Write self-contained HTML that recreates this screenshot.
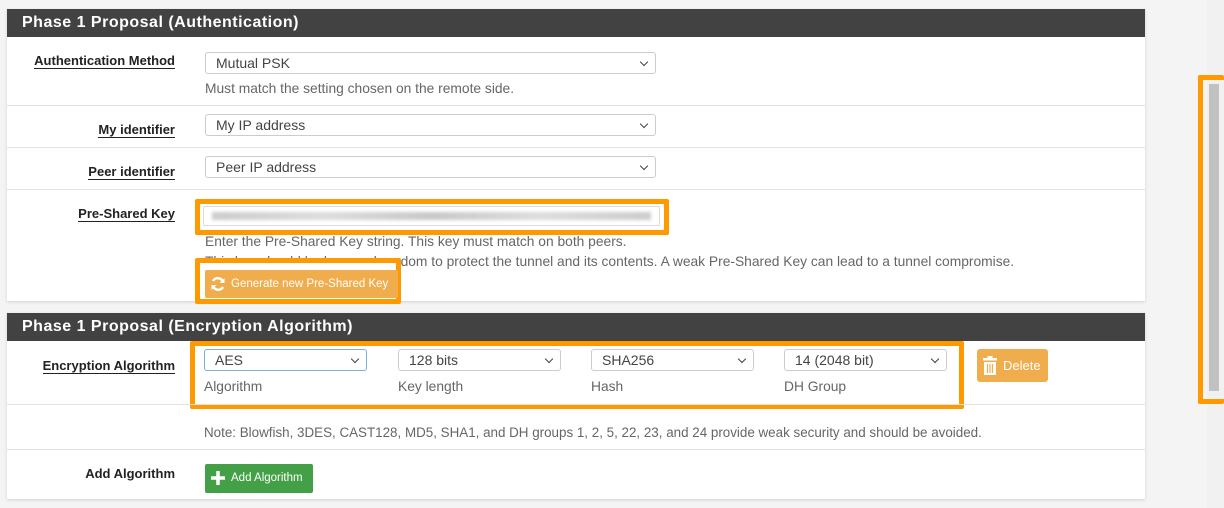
<!DOCTYPE html>
<html><head><style>
*{box-sizing:border-box;margin:0;padding:0}
body{width:1224px;height:508px;background:#f4f4f4;font-family:"Liberation Sans",sans-serif;font-size:13.5px;color:#333;position:relative;overflow:hidden}
.a{position:absolute}
.panel{background:#fff;left:7px;width:1138px;box-shadow:0 1px 3px rgba(0,0,0,.15)}
.hd{background:#424242;color:#fff;font-weight:bold;font-size:16px;left:7px;width:1138px;height:28px;line-height:28px;padding-left:15px;letter-spacing:.5px}
.hr{left:7px;width:1138px;height:1px;background:#e3e3e3}
.lbl{font-weight:bold;text-align:right;width:175px;left:0;font-size:13px;color:#222}
.lbl u{text-decoration:none;border-bottom:1.5px solid #222}
.sel{background:#fff;border:1px solid #ccc;border-radius:3px;height:22px;line-height:20px;padding-left:10px;font-size:14px;color:#444}
.sel:after{content:"";position:absolute;right:8px;top:6px;width:5px;height:5px;border-right:1.6px solid #444;border-bottom:1.6px solid #444;transform:rotate(45deg)}
.help{color:#666;font-size:13.8px}
.ob{border:5px solid #ff9900;border-radius:2px}
</style></head><body>
<div class="a panel" style="top:9px;height:292px"></div>
<div class="a hd" style="top:9px">Phase 1 Proposal (Authentication)</div>
<div class="a lbl" style="top:53px"><u>Authentication Method</u></div>
<div class="a sel" style="left:205px;top:52px;width:451px">Mutual PSK</div>
<div class="a help" style="left:205px;top:81px">Must match the setting chosen on the remote side.</div>
<div class="a hr" style="top:105px"></div>
<div class="a lbl" style="top:122px"><u>My identifier</u></div>
<div class="a sel" style="left:205px;top:114px;width:451px">My IP address</div>
<div class="a hr" style="top:147px"></div>
<div class="a lbl" style="top:164px"><u>Peer identifier</u></div>
<div class="a sel" style="left:205px;top:156px;width:451px">Peer IP address</div>
<div class="a hr" style="top:189px"></div>
<div class="a lbl" style="top:206px"><u>Pre-Shared Key</u></div>
<div class="a ob" style="left:195px;top:199px;width:474px;height:36px"></div>
<div class="a" style="left:203px;top:206px;width:457px;height:20px;background:#fff;border:1px solid #ddd"><div style="margin:5px 8px;height:8px;background:linear-gradient(90deg,#ccc,#ddd,#c8c8c8,#ddd,#ccc);filter:blur(1.5px)"></div></div>
<div class="a help" style="left:205px;top:234px">Enter the Pre-Shared Key string. This key must match on both peers.</div>
<div class="a help" style="left:205px;top:254px">This key should be long and random to protect the tunnel and its contents. A weak Pre-Shared Key can lead to a tunnel compromise.</div>
<div class="a ob" style="left:195px;top:258px;width:206px;height:46px;background:#fff"></div>
<div class="a" style="left:205px;top:270px;width:193px;height:28px;background:#f0ad4e;border-radius:2px;color:#fff;font-size:11.5px;line-height:28px;padding-left:26px">Generate new Pre-Shared Key
<svg class="a" style="left:5px;top:6px" width="16" height="16" viewBox="0 0 16 16"><path d="M13 6A5.5 5.5 0 0 0 3 5M3 10a5.5 5.5 0 0 0 10 1" stroke="#fff" stroke-width="2.4" fill="none"/><path d="M14.5 2v5h-5zM1.5 14V9h5z" fill="#fff"/></svg></div>

<div class="a panel" style="top:313px;height:186px"></div>
<div class="a hd" style="top:313px">Phase 1 Proposal (Encryption Algorithm)</div>
<div class="a lbl" style="top:358px"><u>Encryption Algorithm</u></div>
<div class="a ob" style="left:190px;top:341px;width:774px;height:68px"></div>
<div class="a sel" style="left:204px;top:349px;width:163px;border-color:#7aaede">AES</div>
<div class="a sel" style="left:398px;top:349px;width:163px">128 bits</div>
<div class="a sel" style="left:591px;top:349px;width:163px">SHA256</div>
<div class="a sel" style="left:784px;top:349px;width:163px">14 (2048 bit)</div>
<div class="a help" style="left:204px;top:379px">Algorithm</div>
<div class="a help" style="left:398px;top:379px">Key length</div>
<div class="a help" style="left:591px;top:379px">Hash</div>
<div class="a help" style="left:784px;top:379px">DH Group</div>
<div class="a" style="left:977px;top:349px;width:71px;height:33px;background:#f0ad4e;border-radius:3px;color:#fff;font-size:13px;line-height:33px;padding-left:26px">Delete
<svg class="a" style="left:5px;top:7px" width="16" height="19" viewBox="0 0 16 19"><rect x="1" y="2" width="14" height="2.5" fill="#fff"/><rect x="5.5" y="0" width="5" height="2" fill="#fff"/><path d="M2 6h12v13H2z" fill="#fff"/><path d="M5.5 8v9M8 8v9M10.5 8v9" stroke="#f0ad4e" stroke-width="1.2"/></svg></div>
<div class="a hr" style="top:404px;left:7px"></div>
<div class="a help" style="left:204px;top:425px;font-size:13.4px">Note: Blowfish, 3DES, CAST128, MD5, SHA1, and DH groups 1, 2, 5, 22, 23, and 24 provide weak security and should be avoided.</div>
<div class="a hr" style="top:449px"></div>
<div class="a lbl" style="top:466px">Add Algorithm</div>
<div class="a" style="left:205px;top:464px;width:108px;height:29px;background:#43a047;border-radius:2px;color:#fff;font-size:11.5px;line-height:29px;padding-left:26px">Add Algorithm
<svg class="a" style="left:5px;top:6px" width="16" height="16" viewBox="0 0 16 16"><path d="M8 1v14M1 8h14" stroke="#fff" stroke-width="3.5"/></svg></div>

<div class="a" style="left:1207px;top:0;width:17px;height:508px;background:#f1f1f1"></div>
<div class="a ob" style="left:1198px;top:75px;width:26px;height:329px;border-right:none"></div>
<div class="a" style="left:1209px;top:84px;width:10px;height:307px;background:#c1c1c1"></div>
</body></html>
